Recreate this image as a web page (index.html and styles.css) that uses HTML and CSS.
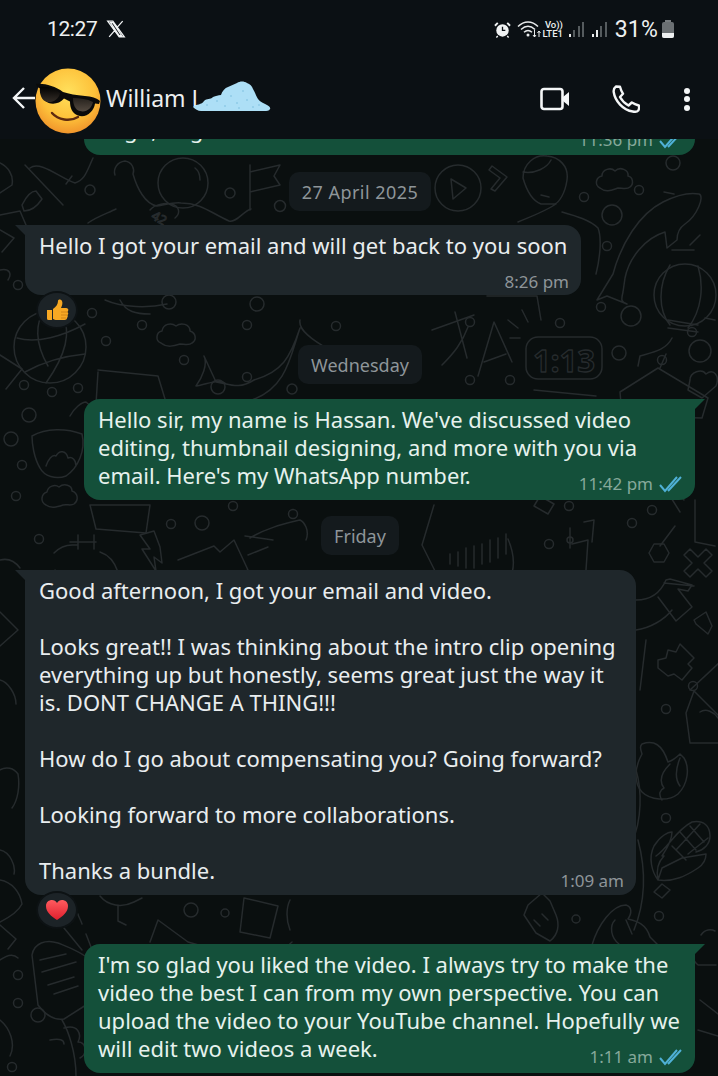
FILE: index.html
```html
<!DOCTYPE html>
<html lang="en">
<head>
<meta charset="utf-8">
<title>William L chat</title>
<link rel="stylesheet" href="styles.css">
</head>
<body>
<div class="phone">
  <header class="top">
    <div class="status">
      <span class="clock">12:27</span>
      <svg class="x-logo" viewBox="0 0 24 24"><path d="M2 2.500h6.200l13.800 19h-6.200zM5.400 4.200l10.400 15.600h2.800L8.200 4.200zM20 2.500 13.600 9.800M10.600 13.600 3.800 21.500" fill="none" stroke="#f2f4f5" stroke-width="1.500"/></svg>
      <span class="spacer"></span>
      <svg class="st-alarm" viewBox="0 0 18 18"><circle cx="9" cy="10" r="6.600" fill="#f0f2f3"/><path d="M9 6v4h3" stroke="#0b1014" stroke-width="1.400" fill="none"/><path d="M1 5l3-3M17 5l-3-3" stroke="#f0f2f3" stroke-width="2"/><path d="M4 16l-1.500 1.500M14 16l1.500 1.500" stroke="#f0f2f3" stroke-width="1.500"/></svg>
      <svg class="st-wifi" viewBox="0 0 24 18"><path d="M1 6.500c6-6 14-6 20 0M4 9.500c4.400-4 9.600-4 14 0M7 12.300c2.500-2.200 5.500-2.200 8 0" fill="none" stroke="#e8eaeb" stroke-width="1.500"/><circle cx="11" cy="15" r="1.500" fill="#e8eaeb"/><path d="M17.500 10v7M17.500 17l-1.500-2M17.500 17l1.500-2M22 17v-6M22 11l-1.500 2M22 11l1.500 2" stroke="#e8eaeb" stroke-width="1" fill="none"/></svg>
      <span class="volte"><span>Vo))</span><span>LTE1</span></span>
      <span class="bars"><i class="b1 on"></i><i class="b2"></i><i class="b3"></i><i class="b4"></i></span>
      <span class="bars second"><i class="b1 on"></i><i class="b2 on"></i><i class="b3"></i><i class="b4"></i></span>
      <span class="pct">31%</span>
      <span class="batt"><span class="batt-cap"></span><span class="batt-body"><span class="batt-fill"></span></span></span>
    </div>
    <div class="bar">
      <svg class="back" viewBox="0 0 24 24"><path d="M23 12H2M12 2 2 12l10 10" fill="none" stroke="#f4f6f7" stroke-width="2.400"/></svg>
      <svg class="avatar" viewBox="0 0 66 68">
        <defs>
          <radialGradient id="face" cx="50%" cy="36%" r="66%"><stop offset="0" stop-color="#ffe05c"/><stop offset="0.62" stop-color="#fdc13a"/><stop offset="1" stop-color="#f0912a"/></radialGradient>
          <linearGradient id="lens" x1="0" y1="0" x2="0" y2="1"><stop offset="0" stop-color="#000"/><stop offset="1" stop-color="#544a40"/></linearGradient>
        </defs>
        <circle cx="33" cy="34" r="32.500" fill="url(#face)"/>
        <path d="M1 17c8-1 19 2 27 8 6 2 13 3 22 4 6 .5 12 2 15 5l-1 3-4-.5c-1 8-9 15-17 12-6-2-8-8-8-14l-6-3c-5 6-14 7-19 2-3-3-5-8-5-12l-3-2z" fill="#0a0a0a"/>
        <path d="M5 20c8-1 15 1 20 6-1 6-7 10-13 9-5-1-8-8-7-15zM38 31c7 0 14 1 20 4-1 6-7 11-13 9-5-1-7-7-7-13z" fill="url(#lens)"/>
        <path d="M17 46c6 7 18 9 26 4" fill="none" stroke="#5e2a10" stroke-width="2.400" stroke-linecap="round"/>
      </svg>
      <span class="name">William L</span>
      <svg class="cloud" viewBox="0 0 78 30">
        <path d="M0 26c3-3 9-2 11-6 3-3 6-1 9-4 3-1 5-2 8-2 1-4 4-7 7-8 3-1 6-3 9-4 3-2 7-2 10 0 3 1 5 3 6 6 2 3 3 7 5 10 2 3 6 4 9 6 2 1 4 3 3 4-1 2-3 2-6 2H45c-7 1-16 2-24 1-5 0-9 0-13-1-3 0-6-2-8-4z" fill="#addff6"/>
        <g fill="#6fb6d8"><circle cx="14" cy="24" r=".7"/><circle cx="24" cy="20" r=".7"/><circle cx="32" cy="25" r=".7"/><circle cx="38" cy="15" r=".7"/><circle cx="44" cy="22" r=".7"/><circle cx="50" cy="10" r=".7"/><circle cx="54" cy="19" r=".7"/><circle cx="60" cy="26" r=".7"/><circle cx="66" cy="24" r=".7"/><circle cx="46" cy="27" r=".7"/></g>
      </svg>
      <span class="spacer"></span>
      <svg class="ic-video" viewBox="0 0 30 24"><rect x="1.500" y="2" width="21" height="20" rx="2.500" fill="none" stroke="#f4f6f7" stroke-width="2.600"/><path d="M23 10l6-5v14l-6-5z" fill="#f4f6f7"/></svg>
      <svg class="ic-phone" viewBox="0 0 28 28"><path d="M4 1.500 8 1.700c.8 3 1.500 5 3 7l-3 3.300c2 3.700 4.800 6.500 8.500 8.500l3.300-3c2.300 1.500 4 2.200 7 3 .5 1.500.3 3.500-.5 5-1.200 1.300-3.500 1.500-5.500 1C11 25 3 16 1.700 7c-.3-2.300.7-4.300 2.300-5.500z" fill="none" stroke="#f4f6f7" stroke-width="2.400" stroke-linejoin="round"/></svg>
      <span class="dots"><i></i><i></i><i></i></span>
    </div>
  </header>
  <main class="chat">
    <svg class="wall" viewBox="0 139 718 937" preserveAspectRatio="none" fill="none" stroke="#262b2d" stroke-width="1.500" stroke-linecap="round" stroke-linejoin="round">
      <g>
        <circle cx="90" cy="190" r="5"/><circle cx="230" cy="193" r="5"/><circle cx="280" cy="206" r="5.500"/><circle cx="169" cy="302" r="7"/><circle cx="257" cy="304" r="7"/><circle cx="92" cy="313" r="4.500"/><circle cx="142" cy="325" r="4.500"/><circle cx="247" cy="325" r="4.500"/><circle cx="336" cy="326" r="4.500"/><circle cx="106" cy="341" r="4.500"/><circle cx="184" cy="360" r="4.500"/><circle cx="247" cy="377" r="4.500"/><circle cx="218" cy="387" r="7"/><circle cx="292" cy="389" r="5"/><circle cx="78" cy="388" r="4.500"/><circle cx="52" cy="392" r="4.500"/><circle cx="18" cy="285" r="4.500"/>
        <circle cx="673" cy="163" r="7"/><circle cx="639" cy="190" r="4.500"/><circle cx="584" cy="197" r="4.500"/><circle cx="612" cy="215" r="10"/><circle cx="607" cy="246" r="4.500"/><circle cx="601" cy="307" r="4.500"/><circle cx="631" cy="316" r="10"/><circle cx="692" cy="332" r="4.500"/><circle cx="619" cy="353" r="7"/><circle cx="662" cy="360" r="4.500"/><circle cx="700" cy="351" r="11"/><circle cx="470" cy="322" r="4.500"/><circle cx="560" cy="323" r="4.500"/><circle cx="470" cy="380" r="4.500"/><circle cx="510" cy="380" r="4.500"/>
        <circle cx="24" cy="385" r="4.500"/><circle cx="29" cy="415" r="7"/><circle cx="11" cy="439" r="7"/><circle cx="22" cy="465" r="4.500"/><circle cx="16" cy="496" r="4.500"/><circle cx="39" cy="539" r="4.500"/><circle cx="171" cy="524" r="4.500"/><circle cx="202" cy="523" r="7"/><circle cx="233" cy="506" r="4.500"/><circle cx="293" cy="514" r="4.500"/>
        <circle cx="569" cy="506" r="4.500"/><circle cx="652" cy="510" r="4.500"/><circle cx="632" cy="523" r="4.500"/><circle cx="549" cy="544" r="4.500"/><circle cx="693" cy="686" r="4.500"/><circle cx="666" cy="709" r="4.500"/><circle cx="666" cy="818" r="4.500"/><circle cx="659" cy="916" r="4.500"/>
        <circle cx="576" cy="919" r="4"/><circle cx="191" cy="910" r="7"/><circle cx="225" cy="913" r="4"/><circle cx="18" cy="975" r="4.500"/><circle cx="18" cy="1003" r="4.500"/><circle cx="38" cy="1015" r="7"/><circle cx="12" cy="1067" r="4.500"/>
      </g>
      <!-- rocket -->
      <path d="M30 168c10-8 30 10 45 15 10-3 12-12 18-25M25 165l38 40M22 205c5-10 10-14 14-14l6 8c-4 6-10 12-18 12zM72 176l-6 8"/>
      <!-- astronaut -->
      <path d="M115 175c-2-6 2-13 10-14 7 1 10 8 8 13 4 14 12 30 24 32 8-1 16-4 24-3 20 0 30 10 48 18 8 2 14-10 22-12M195 168c4 3 5 8 5 12M150 210c5-6 16-8 24-5 6 3 6 9 1 13M88 223c8-6 20-10 28-14"/>
      <circle cx="183" cy="183" r="25"/>
      <text x="152" y="223" font-family="Noto Sans, sans-serif" font-size="13" stroke-width="1" transform="rotate(30 160 218)">42</text>
      <!-- flag -->
      <path d="M250 210V172l30-7-6 11 6 9-30 7M250 165v45"/>
      <!-- play -->
      <circle cx="458" cy="188" r="23"/><path d="M451 179l15 9-13 11z"/><path d="M492 166l15 11-12 14-4-2 9-11-11-8z"/>
      <!-- person -->
      <path d="M523 178c0-14 12-24 24-22 12 1 22 10 20 24-2 14-8 22-12 24h-14c-8-3-14-12-18-26zM523 172c12 2 24-4 28-12M541 195l8 2M556 204c-12 8-24 12-38 18M562 212c14 4 28 8 36 16 4 10 2 30-2 46M487 296h50l4 24"/>
      <!-- cloud -->
      <path d="M600 188c-6-3-4-11 2-12 0-7 9-9 13-5 5-5 14-1 13 5 5 1 6 8 2 11-3 3-8 1-12 1-6 2-12 5-18 0z"/>
      <!-- fish -->
      <path d="M613 274c8-30 26-60 50-72 12-6 25-10 36-8 6 2-2 22-14 30-6 4-8 10-8 16l-10 8-2-16c-20 6-36 26-40 46l-2 14c-2 8-2 10 4 12l-20-8-10 4zM664 192l10 2"/>
      <!-- lantern -->
      <circle cx="685" cy="295" r="31"/><path d="M670 265c-12 20-12 45 0 60M698 266c6 20 4 44-10 62M705 318l10 2M672 250h22M690 245l10-10M668 320l30 5M668 328l30 4M672 338c-6 12-18 14-32 18l-2 10"/>
      <!-- X A -->
      <path d="M432 330l42-15M455 312l12 46M442 365c12-12 20-22 26-38M478 376l16-54 18 40M484 362l22-8"/>
      <!-- clock -->
      <rect x="526" y="337" width="76" height="42" rx="12"/><path d="M534 390l62 6M518 328l-10-8M528 322l-6-12M520 338h-10"/>
      <text x="533" y="372" font-family="Noto Sans, sans-serif" font-size="31" font-weight="700" fill="#0a0f0f" stroke-width="1.300">1:13</text>
      <!-- whale -->
      <path d="M204 356l12 26c14 2 22 8 38-2 28-8 36-22 46-52-10 30-14 60-48 72M204 356c4 8-2 22-8 30 12-2 24-8 30-2M300 320c-2 10 12 20 30 30M105 300c18 8 44 8 62 4M120 300c6 12 16 14 30 14"/>
      <path d="M161 343c-6-2-5-11 1-12 1-7 9-9 14-5 5-4 14-2 14 5 6 2 7 9 2 12-3 3-8 1-12 1-6 2-13 4-19-1z"/>
      <!-- globe -->
      <circle cx="50" cy="347" r="36"/><path d="M17 338c20 6 46-2 68-14M25 372c18-10 40-16 60-18M44 312c-8 10-10 30 4 54M62 315c8 14 8 34-16 68"/>
      <path d="M0 355l22 14-16 20M98 370l60 6 14 46M98 372l-2 32"/>
      <path d="M620 392l38-24 50 30-6 20-80-2zM660 368l6-14M690 380c0-8 12-12 16-6 8-6 14 2 10 12l-14 12-14-8z"/>
      <!-- bowl -->
      <path d="M32 436c14-8 34-8 50-2 4 16-4 34-16 42-10 4-22 0-26-8-6-10-8-24-8-32zM46 466c2-6 6-12 10-10 3-6 10-6 12 2 4-2 8 2 8 8M70 416c4-8 12-14 16-14 8 6 12 16 8 26l-6 4"/>
      <path d="M46 505c-6-3-5-11 1-13 1-6 8-8 12-5 5-4 13-2 13 4 6 2 7 9 2 13-3 2-7 0-11 1-6 2-12 4-17 0z"/>
      <path d="M90 505h60l-4 28-50-4z"/>
      <path d="M54 553c6-6 12-8 18-8h6M70 542h26M78 535v14M94 535v14M55 570c-2 4 0 14 0 30M100 552c6 2 14 8 18 20"/>
      <path d="M140 535l14-4 6 16 2 16-8-6 2 14-14-22 8 0z"/>
      <path d="M178 560l36-14 6 6 14-12 14 30-44 20"/>
      <path d="M250 538c16-10 34-14 50-18 4 2 10 10 6 20M245 536l28 4M248 555l20-8"/>
      <!-- mic pill -->
      <path d="M434 505l-12 40 24 48c20 10 46 4 62-10 8-14 6-30 0-44M450 554v10M458 552v14M466 548v20M474 546v22M482 544v20M490 540v22M498 538v20M506 534v20"/>
      <path d="M572 544l16-4-2 30M570 528v20M584 522l10-2-2 22"/><circle cx="570" cy="540" r="3"/>
      <path d="M540 496l14 8-6 10-14-8zM680 512l-10-16 8-4 6 8M675 526l-15 20M695 500v42l20 4"/>
      <path d="M649 553l5-9h10l5 9-5 9h-10z"/>
      <path d="M690 549l8 8 8-8 6 6-8 8 8 8-6 6-8-8-8 8-6-6 8-8-8-8z"/>
      <path d="M636 600c14 0 24-6 30-20l4-1 22 6-4 6-10-2 14 18-16 14-18-24M664 583l30 3M636 630c14-2 28-10 36-20M646 640l-6 50"/>
      <path d="M694 620l12-8 6 14-4 8-12-10z"/>
      <path d="M658 660l8-2 2-8 8 2 4-8 14 14-6 6 4 4-10 12-8-6-6 2-10-8z"/>
      <path d="M690 690l30-28M690 743l-4-30 8-22 32 32M690 743h30M700 712c6-4 14 0 18 6"/>
      <!-- flame -->
      <path d="M642 744c12-4 20 0 26 18 6-2 10-6 12-8l4 4c6 10 4 26-6 36-10 8-28 6-36-2-8-8-8-24 0-38-2-6-2-8 0-10zM670 764c-8 8-12 16-6 24-4 2-6 6-2 12M680 758c-4 10-6 20 0 28"/>
      <!-- corn -->
      <path d="M656 856c12-8 20-26 36-34 12-2 18 4 18 14 0 8-6 14-14 16M664 856c-6 6-8 14-6 24-6-8-10-22-4-34 6-10 14-14 18-14 0 6-2 12-10 24zM658 880c16 2 28-4 40-12 6-4 8-10 8-14l-24 4-20 10zM654 892l8 6 8-8-8-6zM680 832l16 18M672 846l14 14M690 826l14 16M700 824l-24 26M708 838l-20 16"/>
      <path d="M636 770c6 20 6 50-4 72M638 840c8 30 8 60-4 90"/>
      <!-- bottle & hand -->
      <path d="M528 905l14-12 8 8 6 14c4 10 2 20-6 26l-14-8-12-18zM534 920l6 6M542 914l6 6"/>
      <path d="M592 945c6-20 20-40 34-40 6 2 6 8 2 14 8 2 18 4 22 18l8 8M615 920c-6 6-4 18 4 24M626 920l6 14"/>
      <path d="M701 935c4-6 10-6 14-4M700 945c-8 3-10 14-2 20h18M700 1000l18 14M698 1030l20 6"/>
      <!-- left bottom -->
      <path d="M32 955c2-12 14-16 26-12 10 4 22 8 34 18 8 10 2 34-6 44l-22 14c-12 2-20-6-26-14zM40 960l26-6M42 972l34-10M48 985l26-8M54 994l24-8M82 950l-18-22M96 960l-10-26M82 924c-2-6-4-8-4-10"/>
      <path d="M0 925l16 14-8 10M0 960c8-6 14-6 18-2M0 1020c10 8 16 24 10 36M64 1028c14-4 18 6 14 14 8 0 10 12 2 16M50 1040c10-2 14 0 14 4M62 1020c6 10 14 32 14 56"/>
      <path d="M0 880c12 2 20 12 22 24-4 8-14 14-22 18"/>
      <path d="M150 942l8-22 30 22 28 8-22 10M100 896c8 10 22 12 34 6l8-4M118 905v16l8 4M244 898l34 8-8 32-30-6zM290 900c-4 8-4 20 0 30M292 942c-8 6-12 14-12 16"/>
      <path d="M0 215l20-4 6 14M0 230l14 8-12 14M0 270c10-2 12 4 8 10M0 163c8 4 14 12 12 22l-12 8"/>
      <path d="M0 612l18 18-18 16M0 680c8 2 16 14 16 24M0 770c6-4 14-2 18 4 2 12 0 26-6 34M0 560c8-2 14 0 20 8M0 850c10 2 16 16 14 24"/>
    </svg>

    <div class="row out cut">
      <div class="bubble out-b cut-b">
        <div class="cut-text">Ragu, hog</div>
        <div class="meta cut-meta"><span class="time">11:36 pm</span><svg class="ticks" viewBox="0 0 24 17"><path d="M1 9l5 6L18 1M9 15 22 1" fill="none" stroke="#4fb0d6" stroke-width="2"/></svg></div>
      </div>
    </div>

    <div class="date date-1"><span>27 April 2025</span></div>

    <div class="row in">
      <div class="bubble in-b tail-l b1-w">
        <p class="txt">Hello I got your email and will get back to you soon</p>
        <div class="meta m-below"><span class="time">8:26 pm</span></div>
      </div>
    </div>
    <div class="react">
      <svg viewBox="0 0 24 24"><path d="M2 12h5v10H3.500A1.500 1.500 0 0 1 2 20.500zM8 11c3-2 5-5 5-8 0-2 3-2 4 0 1 2 0 5-1 7h5c2 0 3 2 2 3l-.5 1c1 1 1 2 0 3 .5 1 .3 2-.5 3 0 1-1 2-2.500 2H12c-2 0-3-.5-4-1z" fill="#f7a823"/><path d="M16 14h7M16 17h6M16 20h5" stroke="#c97b12" stroke-width=".8"/></svg>
    </div>

    <div class="date date-2"><span>Wednesday</span></div>

    <div class="row out">
      <div class="bubble out-b tail-r">
        <p class="txt">Hello sir, my name is Hassan. We've discussed video<br>editing, thumbnail designing, and more with you via<br>email. Here's my WhatsApp number.</p>
        <div class="meta m-over"><span class="time">11:42 pm</span><svg class="ticks" viewBox="0 0 24 17"><path d="M1 9l5 6L18 1M9 15 22 1" fill="none" stroke="#4fb0d6" stroke-width="2"/></svg></div>
      </div>
    </div>

    <div class="date date-3"><span>Friday</span></div>

    <div class="row in">
      <div class="bubble in-b tail-l">
        <p class="txt">Good afternoon, I got your email and video.<br><br>Looks great!! I was thinking about the intro clip opening<br>everything up but honestly, seems great just the way it<br>is. DONT CHANGE A THING!!!<br><br>How do I go about compensating you? Going forward?<br><br>Looking forward to more collaborations.<br><br>Thanks a bundle.</p>
        <div class="meta m-over-in"><span class="time">1:09 am</span></div>
      </div>
    </div>
    <div class="react">
      <svg viewBox="0 0 24 24"><defs><linearGradient id="hrt" x1="0" y1="0" x2="0" y2="1"><stop offset="0" stop-color="#ff5b5f"/><stop offset="1" stop-color="#e01f2d"/></linearGradient></defs><path d="M12 22C6 18 1 14 1 8c0-4 3-6 6-6 2 0 4 1 5 3 1-2 3-3 5-3 3 0 6 2 6 6 0 6-5 10-11 14z" fill="url(#hrt)"/></svg>
    </div>

    <div class="row out last">
      <div class="bubble out-b tail-r">
        <p class="txt">I'm so glad you liked the video. I always try to make the<br>video the best I can from my own perspective. You can<br>upload the video to your YouTube channel. Hopefully we<br>will edit two videos a week.</p>
        <div class="meta m-over"><span class="time">1:11 am</span><svg class="ticks" viewBox="0 0 24 17"><path d="M1 9l5 6L18 1M9 15 22 1" fill="none" stroke="#4fb0d6" stroke-width="2"/></svg></div>
      </div>
    </div>
  </main>
</div>
</body>
</html>
```
FILE: styles.css
```css
* { box-sizing: border-box; }
html, body { margin: 0; padding: 0; background: #0a0f0f; }
.phone {
  width: 718px;
  height: 1076px;
  overflow: hidden;
  display: flex;
  flex-direction: column;
  font-family: "Noto Sans", sans-serif;
  color: #e9edef;
}
.top { height: 139px; background: #0b1014; flex: none; position: relative; z-index: 2; }
.spacer { flex: 1; }

.status { height: 58px; display: flex; align-items: center; padding: 0 44px 0 47px; color: #eef0f1; font-family: Roboto, sans-serif; }
.clock { font-size: 21px; letter-spacing: -.4px; }
.x-logo { width: 20px; height: 20px; margin-left: 9px; }
.st-alarm { width: 17px; height: 17px; }
.st-wifi { width: 24px; height: 18px; margin-left: 6px; }
.volte { display: flex; flex-direction: column; width: 21px; font-size: 9.500px; line-height: 9px; font-weight: 500; margin-left: 1px; align-items: flex-end; }
.bars { display: flex; align-items: flex-end; gap: 2.300px; height: 16px; margin-left: 6px; }
.bars.second { margin-left: 8px; }
.bars i { display: block; width: 2px; background: #555b5e; }
.bars i.on { background: #e8eaeb; }
.bars .b1 { height: 3px; } .bars .b2 { height: 7px; } .bars .b3 { height: 11px; } .bars .b4 { height: 15px; }
.pct { font-size: 23px; margin-left: 8px; letter-spacing: .2px; }
.batt { display: flex; flex-direction: column; align-items: center; margin-left: 4px; }
.batt-cap { width: 6px; height: 2px; background: #777c7f; }
.batt-body { width: 12px; height: 16px; background: #6b7073; border-radius: 2px; display: flex; align-items: flex-end; overflow: hidden; }
.batt-fill { width: 100%; height: 5px; background: #eef0f1; }

.bar { height: 81px; display: flex; align-items: center; padding: 0 28px 0 12px; position: relative; }
.back { width: 24px; height: 24px; flex: none; margin-top: -2px; }
.avatar { width: 66px; height: 68px; flex: none; margin: 4px 0 0 -1px; position: relative; }
.name { font-family: "Noto Sans", sans-serif; font-size: 23px; margin-left: 5px; color: #eef0f1; margin-top: -2px; }
.cloud { position: absolute; left: 193px; top: 23px; width: 78px; height: 30px; }
.ic-video { width: 30px; height: 24px; margin-top: 1px; }
.ic-phone { width: 28px; height: 28px; margin: 1px 0 0 42px; }
.dots { display: flex; flex-direction: column; gap: 2.500px; margin: 1px 0 0 44px; }
.dots i { display: block; width: 6px; height: 6px; border-radius: 50%; background: #f4f6f7; }

.chat {
  flex: 1;
  position: relative;
  overflow: hidden;
  background: #0a0f0f;
  display: flex;
  flex-direction: column;
  padding: 0 23px 0 25px;
}
.wall { position: absolute; left: 0; top: 0; width: 718px; height: 937px; }
.row { display: flex; position: relative; }
.row.out { justify-content: flex-end; }
.row.last { margin-top: 15px; }

.bubble { position: relative; border-radius: 16px; }
.in-b { background: #1f272b; width: 611px; }
.out-b { background: #14503a; width: 611px; color: #e6f2ed; }
.b1-w { width: 556px; }
.tail-l { border-top-left-radius: 0; }
.tail-r { border-top-right-radius: 0; }
.tail-l::before, .tail-r::before {
  content: "";
  position: absolute;
  top: 0;
  width: 12px;
  height: 12px;
}
.tail-l::before { left: -10px; background: #1f272b; clip-path: polygon(0 0, 100% 0, 100% 100%); }
.tail-r::before { right: -10px; background: #14503a; clip-path: polygon(0 0, 100% 0, 0 100%); }

.txt { margin: 0; padding: 6px 14px 0; font-size: 22px; line-height: 28px; white-space: nowrap; }

.meta { display: flex; justify-content: flex-end; align-items: center; gap: 6px; height: 22px; padding-right: 12px; font-size: 17px; line-height: 22px; }
.in-b .time { color: #8e9599; }
.out-b .time { color: #86a99b; }
.ticks { width: 24px; height: 17px; }
.m-below { margin-top: 12px; margin-bottom: 2px; }
.m-over { margin-top: -16px; margin-bottom: 5px; }
.m-over-in { margin-top: -14px; margin-bottom: 3px; }

.cut-b { height: 16px; overflow: hidden; border-top-left-radius: 0; border-top-right-radius: 0; display: flex; justify-content: space-between; }
.cut-text { font-size: 22px; line-height: 28px; margin-top: -24px; padding-left: 14px; white-space: nowrap; }
.cut-meta { margin-top: -10px; }

.date { display: flex; justify-content: center; position: relative; }
.date span { display: block; background: #141a1d; color: #8e9599; font-size: 18px; line-height: 24px; padding: 7.500px 13px; border-radius: 10px; }
.date-1 { margin: 17px 0 14px; }
.date-1 span { letter-spacing: .45px; }
.date-2 { margin: 16px 0 15px; }
.date-3 { margin: 16px 0 15px; }

.react {
  position: relative;
  width: 42px;
  height: 38px;
  margin: -4px 0 0 11px;
  border-radius: 50%;
  background: #1c2327;
  border: 2px solid #0d1214;
  display: flex;
  align-items: center;
  justify-content: center;
}
.react svg { width: 24px; height: 24px; }
```
